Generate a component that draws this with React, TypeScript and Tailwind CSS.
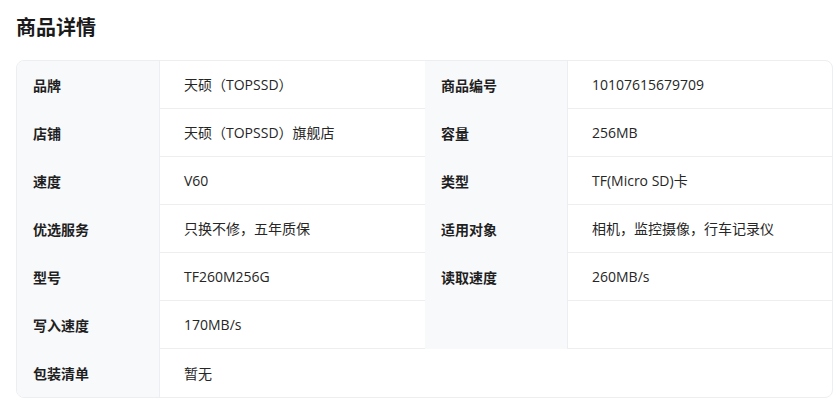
const font = "font-['Open_Sans','Noto_Sans_CJK_SC',sans-serif]";

type Cell = { label: string; value: string };

const ROWS: [Cell, Cell | null][] = [
  [{ label: "品牌", value: "天硕（TOPSSD）" }, { label: "商品编号", value: "10107615679709" }],
  [{ label: "店铺", value: "天硕（TOPSSD）旗舰店" }, { label: "容量", value: "256MB" }],
  [{ label: "速度", value: "V60" }, { label: "类型", value: "TF(Micro SD)卡" }],
  [{ label: "优选服务", value: "只换不修，五年质保" }, { label: "适用对象", value: "相机，监控摄像，行车记录仪" }],
  [{ label: "型号", value: "TF260M256G" }, { label: "读取速度", value: "260MB/s" }],
  [{ label: "写入速度", value: "170MB/s" }, { label: "", value: "" }],
];

function Label({ text }: { text: string }) {
  return (
    <div className="h-12 flex items-center pl-4 bg-[#f8f9fb] border-r border-[#eceef1] text-[14px] font-semibold text-[#1f1f1f]">
      {text}
    </div>
  );
}

function Value({ text, span }: { text: string; span?: boolean }) {
  return (
    <div
      className={
        "h-12 flex items-center pl-6 text-[14px] text-[#262626] " +
        (span ? "col-span-3" : "border-b border-[#eceef1]")
      }
    >
      {text}
    </div>
  );
}

export default function App() {
  return (
    <div className={`${font} bg-white w-[837px] h-[410px] px-4 pt-[14px]`}>
      <h2 className="text-[20px] font-bold text-[#1a1a1a] leading-[28px]">商品详情</h2>
      <div className="mt-[18px] w-[817px] border border-[#eceef1] rounded-lg overflow-hidden grid grid-cols-[143px_265px_143px_1fr]">
        {ROWS.map(([a, b], i) => (
          <div key={i} className="contents">
            <Label text={a.label} />
            <Value text={a.value} />
            {b && <Label text={b.label} />}
            {b && <Value text={b.value} />}
          </div>
        ))}
        <Label text="包装清单" />
        <Value text="暂无" span />
      </div>
    </div>
  );
}
